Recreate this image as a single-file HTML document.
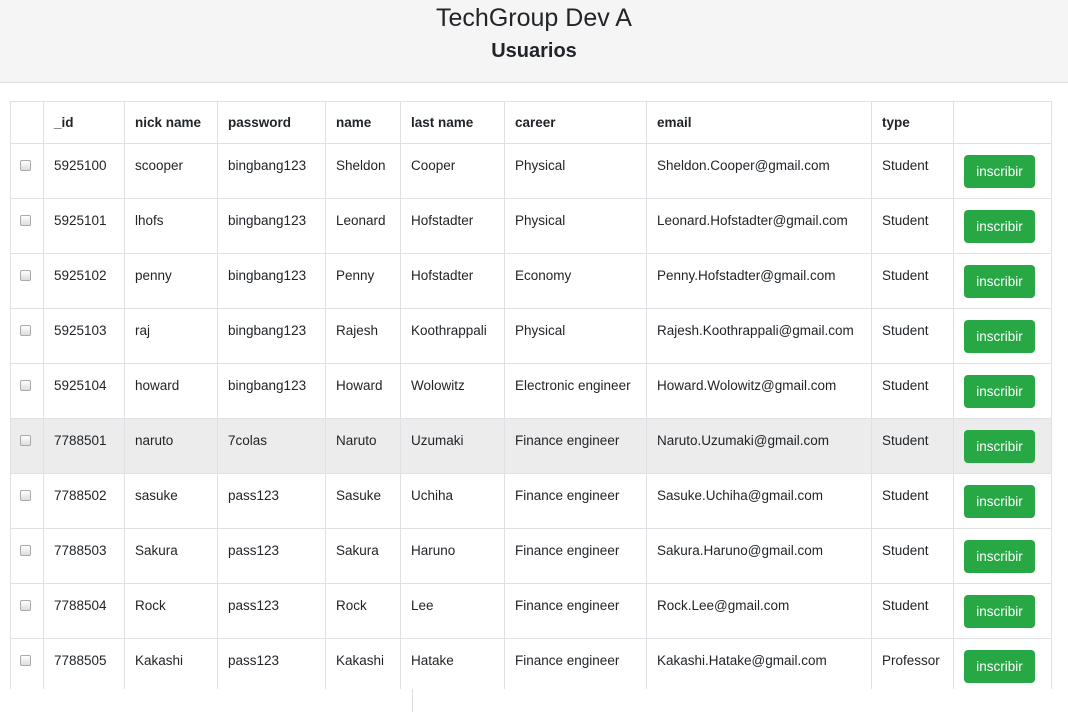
<!DOCTYPE html>
<html><head><style>
body{margin:0;width:1068px;height:712px;overflow:hidden;background:#fff;font-family:"Liberation Sans",sans-serif;color:#212529;position:relative}
.hdr{height:82px;background:#f5f5f5;border-bottom:1px solid #ddd;text-align:center}
.hdr .t{position:absolute;top:4px;left:0;right:0;font-size:25px}
.hdr .s{position:absolute;top:40px;left:0;right:0;font-size:20px;font-weight:bold}
.wrap{position:absolute;left:10px;top:101px;width:1042px;height:588px;overflow:hidden}
table{border-collapse:collapse;font-size:13.5px;table-layout:fixed;width:1041px}
td,th{border:1px solid #dee2e6;padding:0 10px;vertical-align:top;text-align:left;white-space:nowrap}
th{height:41px;vertical-align:middle;font-weight:bold}
td{height:55px;padding-top:14px;box-sizing:border-box}
tr.h td{background:#ececec}
.cb{display:inline-block;width:9px;height:9px;border:1px solid #aaa;border-radius:2px;background:linear-gradient(#fff,#ddd);margin-top:2px;margin-left:-1px}
.b{display:inline-block;background:#28a745;color:#fff;border-radius:4px;width:71px;height:33px;line-height:33px;text-align:center;margin-top:-3px;font-size:13.5px}
</style></head><body>
<div class="hdr"><div class="t">TechGroup Dev A</div><div class="s">Usuarios</div></div>
<div class="wrap"><table>
<colgroup><col style="width:33px"><col style="width:81px"><col style="width:93px"><col style="width:108px"><col style="width:75px"><col style="width:104px"><col style="width:142px"><col style="width:225px"><col style="width:82px"><col style="width:98px"></colgroup>
<tr><th></th><th>_id</th><th>nick name</th><th>password</th><th>name</th><th>last name</th><th>career</th><th>email</th><th>type</th><th></th></tr>
<tr><td><span class="cb"></span></td><td>5925100</td><td>scooper</td><td>bingbang123</td><td>Sheldon</td><td>Cooper</td><td>Physical</td><td>Sheldon.Cooper@gmail.com</td><td>Student</td><td><span class="b">inscribir</span></td></tr>
<tr><td><span class="cb"></span></td><td>5925101</td><td>lhofs</td><td>bingbang123</td><td>Leonard</td><td>Hofstadter</td><td>Physical</td><td>Leonard.Hofstadter@gmail.com</td><td>Student</td><td><span class="b">inscribir</span></td></tr>
<tr><td><span class="cb"></span></td><td>5925102</td><td>penny</td><td>bingbang123</td><td>Penny</td><td>Hofstadter</td><td>Economy</td><td>Penny.Hofstadter@gmail.com</td><td>Student</td><td><span class="b">inscribir</span></td></tr>
<tr><td><span class="cb"></span></td><td>5925103</td><td>raj</td><td>bingbang123</td><td>Rajesh</td><td>Koothrappali</td><td>Physical</td><td>Rajesh.Koothrappali@gmail.com</td><td>Student</td><td><span class="b">inscribir</span></td></tr>
<tr><td><span class="cb"></span></td><td>5925104</td><td>howard</td><td>bingbang123</td><td>Howard</td><td>Wolowitz</td><td>Electronic engineer</td><td>Howard.Wolowitz@gmail.com</td><td>Student</td><td><span class="b">inscribir</span></td></tr>
<tr class="h"><td><span class="cb"></span></td><td>7788501</td><td>naruto</td><td>7colas</td><td>Naruto</td><td>Uzumaki</td><td>Finance engineer</td><td>Naruto.Uzumaki@gmail.com</td><td>Student</td><td><span class="b">inscribir</span></td></tr>
<tr><td><span class="cb"></span></td><td>7788502</td><td>sasuke</td><td>pass123</td><td>Sasuke</td><td>Uchiha</td><td>Finance engineer</td><td>Sasuke.Uchiha@gmail.com</td><td>Student</td><td><span class="b">inscribir</span></td></tr>
<tr><td><span class="cb"></span></td><td>7788503</td><td>Sakura</td><td>pass123</td><td>Sakura</td><td>Haruno</td><td>Finance engineer</td><td>Sakura.Haruno@gmail.com</td><td>Student</td><td><span class="b">inscribir</span></td></tr>
<tr><td><span class="cb"></span></td><td>7788504</td><td>Rock</td><td>pass123</td><td>Rock</td><td>Lee</td><td>Finance engineer</td><td>Rock.Lee@gmail.com</td><td>Student</td><td><span class="b">inscribir</span></td></tr>
<tr><td><span class="cb"></span></td><td>7788505</td><td>Kakashi</td><td>pass123</td><td>Kakashi</td><td>Hatake</td><td>Finance engineer</td><td>Kakashi.Hatake@gmail.com</td><td>Professor</td><td><span class="b">inscribir</span></td></tr>
</table></div>
<div style="position:absolute;left:412px;top:689px;width:1px;height:23px;background:#ddd"></div>
</body></html>
